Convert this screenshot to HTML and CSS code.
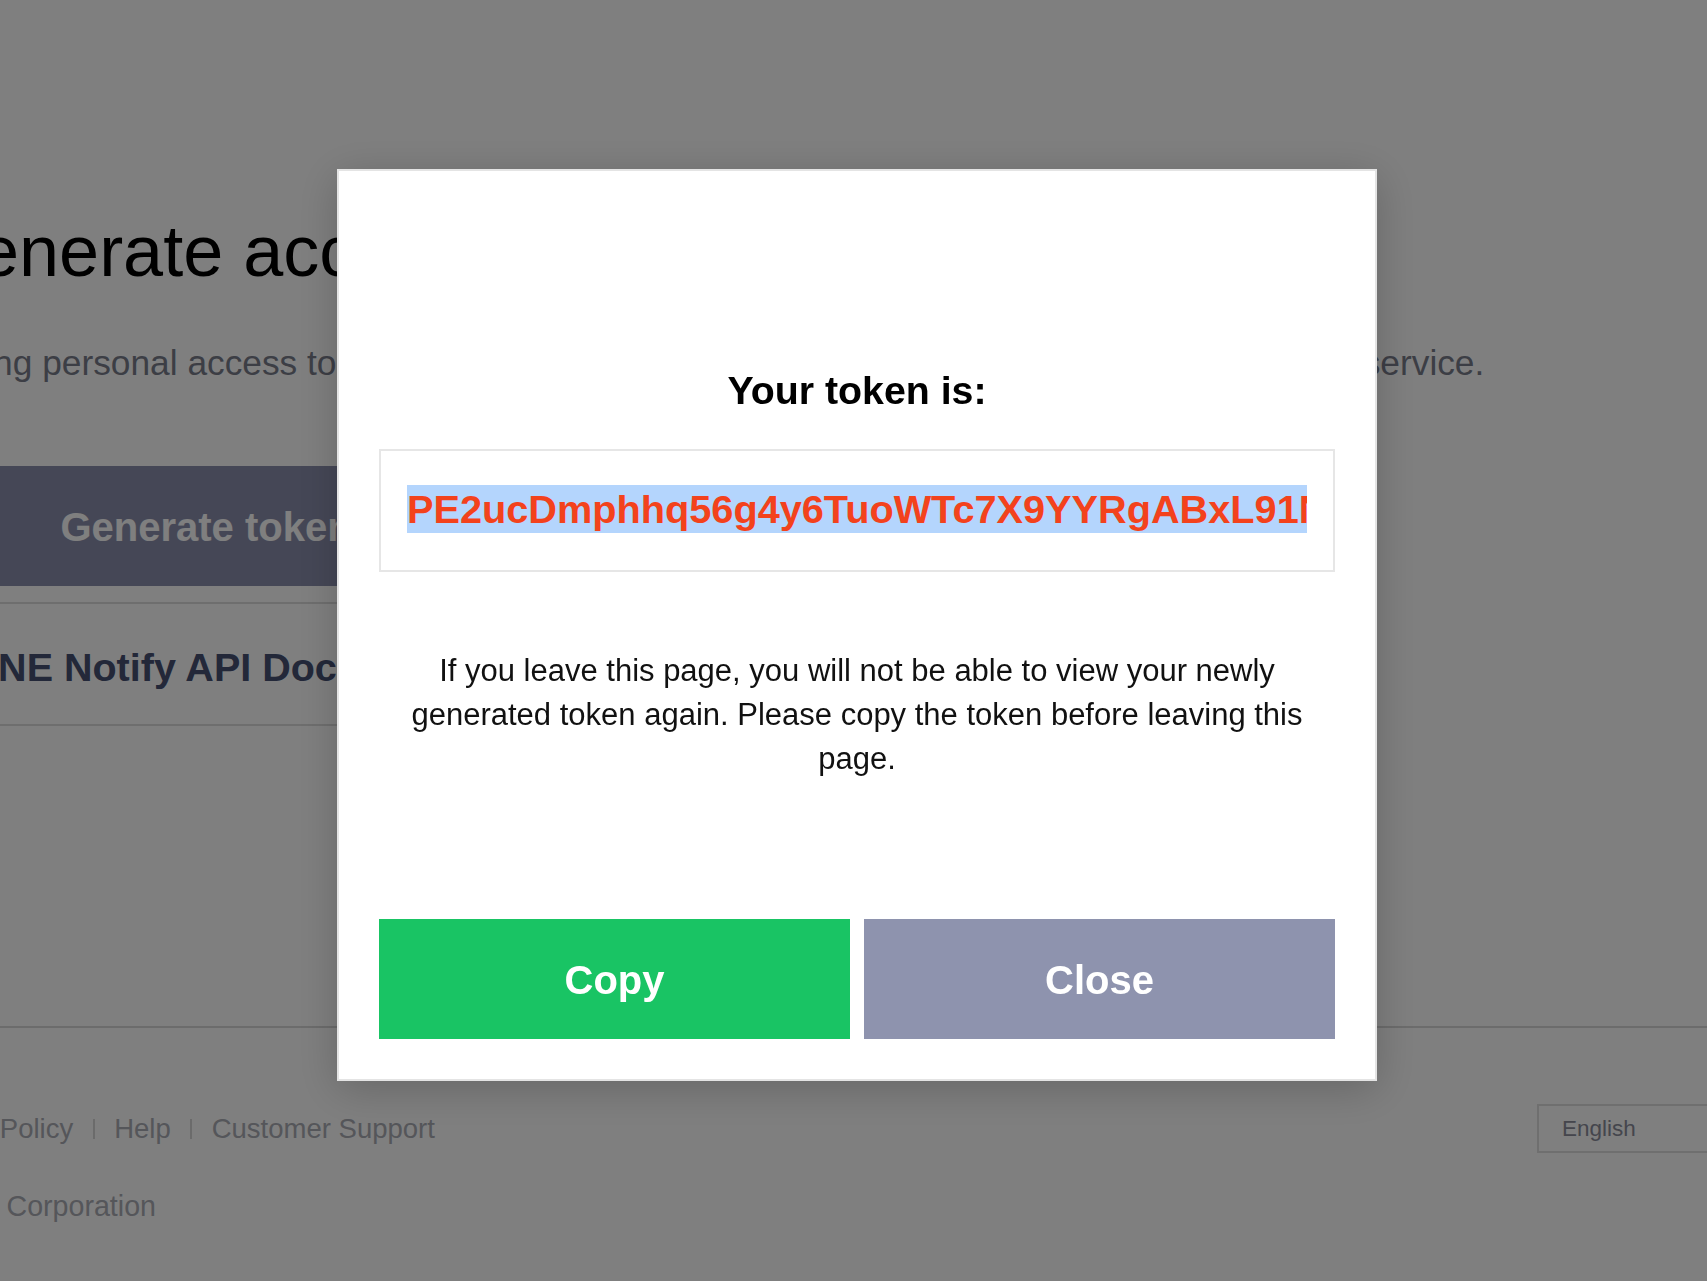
FILE: index.html
```html
<!DOCTYPE html>
<html>
<head>
    <meta charset="UTF-8">
    <title>LINE Notify - Generate access token</title>
    <link rel="stylesheet" href="styles.css">
</head>
<body>
    <!-- page behind the dialog -->
    <div class="page">
        <h1 class="page-title">Generate access token</h1>
        <p class="page-lead">By using personal access tokens, you can configure notifications without having to add a web service.</p>
        <button type="button" class="gen-btn">Generate token</button>
        <div class="doc-link">LINE Notify API Document</div>

        <div class="footer">
            <div class="footer-row">
                <ul class="footer-links">
                    <li>Privacy Policy</li>
                    <li class="sep"></li>
                    <li>Help</li>
                    <li class="sep"></li>
                    <li>Customer Support</li>
                </ul>
                <div class="lang-select">English</div>
            </div>
            <p class="copyright">&copy; LINE Corporation</p>
        </div>
    </div>

    <!-- token dialog -->
    <div class="overlay">
        <div class="modal">
            <h2 class="modal-title">Your token is:</h2>
            <div class="token-box">
                <div class="token-clip">
                    <span class="token-text">PE2ucDmphhq56g4y6TuoWTc7X9YYRgABxL91NkQe3vJ8sWm</span>
                </div>
            </div>
            <p class="modal-note">If you leave this page, you will not be able to view your newly generated token again. Please copy the token before leaving this page.</p>
            <div class="modal-actions">
                <button type="button" class="btn btn-copy">Copy</button>
                <button type="button" class="btn btn-close">Close</button>
            </div>
        </div>
    </div>
</body>
</html>
```

FILE: styles.css
```css
html, body {
    margin: 0;
    padding: 0;
    overflow: hidden;
}
body {
    background-color: #FFFFFF;
    font-family: "Liberation Sans", Arial, sans-serif;
    height: 1281px;
}

/* background page */
.page {
    margin-left: -94px;
    width: 1849px;
    padding-top: 206px;
}
.page-title {
    margin: 0;
    padding-left: 17px;
    font-size: 72px;
    font-weight: normal;
    line-height: 91px;
    color: #000000;
}
.page-lead {
    margin: 41px 0 0 -9px;
    font-size: 35.3px;
    line-height: 50px;
    color: #797C8B;
}
.gen-btn {
    display: block;
    margin-top: 78px;
    width: 600px;
    height: 120px;
    border: none;
    padding-top: 4px;
    background-color: #8B8FAD;
    color: #FFFFFF;
    font-family: "Liberation Sans", Arial, sans-serif;
    font-size: 40px;
    font-weight: bold;
}
.doc-link {
    margin-top: 16px;
    width: 1400px;
    padding: 40px 0 34px 57px;
    border-top: 2px solid #DDDDDD;
    border-bottom: 2px solid #DDDDDD;
    font-size: 39.5px;
    font-weight: bold;
    line-height: 46px;
    color: #465073;
}

.footer {
    margin-top: 300px;
    border-top: 2px solid #D8D8D8;
    padding-top: 76px;
}
.footer-row {
    display: flex;
    align-items: center;
    height: 49px;
}
.footer-links {
    display: flex;
    align-items: center;
    gap: 19.5px;
    margin: 0 0 0 -4px;
    padding: 0;
    list-style: none;
    font-size: 27.5px;
    color: #AAACB4;
}
.footer-links .sep {
    width: 2px;
    height: 20px;
    background-color: #D6D6D6;
}
.lang-select {
    margin-left: auto;
    margin-right: 1px;
    width: 190px;
    height: 45px;
    border: 2px solid #DEDEDE;
    padding-left: 23px;
    font-size: 22.5px;
    line-height: 45px;
    color: #8A8C9A;
}
.copyright {
    margin: 36px 0 0 0;
    font-size: 28.6px;
    line-height: 34px;
    color: #AAACB4;
}

/* dialog */
.overlay {
    position: fixed;
    top: 0;
    left: 0;
    right: 0;
    bottom: 0;
    background-color: rgba(0, 0, 0, 0.5);
    display: flex;
    align-items: flex-start;
    padding: 169px 0 0 337px;
}
.modal {
    box-sizing: border-box;
    width: 1040px;
    height: 912px;
    background-color: #FFFFFF;
    border: 2px solid #E4E4E4;
    padding: 196px 40px 40px 40px;
    box-shadow: 0 8px 40px rgba(0, 0, 0, 0.2);
    display: flex;
    flex-direction: column;
}
.modal-title {
    margin: 0;
    text-align: center;
    font-size: 39.3px;
    line-height: 46px;
    font-weight: bold;
    color: #000000;
}
.token-box {
    margin-top: 36px;
    height: 119px;
    box-sizing: content-box;
    border: 2px solid #E6E6E6;
    padding: 0 26px;
}
.token-clip {
    overflow: hidden;
    white-space: nowrap;
    padding-top: 34px;
}
.token-text {
    display: inline-block;
    background-color: #B4D5FD;
    color: #F3421C;
    font-size: 39.7px;
    font-weight: bold;
    line-height: 48px;
}
.modal-note {
    margin: 77px 0 0 0;
    text-align: center;
    font-size: 31px;
    line-height: 44px;
    color: #111111;
}
.modal-actions {
    margin-top: auto;
    display: flex;
    gap: 14px;
}
.btn {
    flex: 1;
    height: 120px;
    border: none;
    padding-top: 4px;
    color: #FFFFFF;
    font-family: "Liberation Sans", Arial, sans-serif;
    font-size: 40px;
    font-weight: bold;
}
.btn-copy {
    background-color: #19C464;
}
.btn-close {
    background-color: #8E93AE;
}
```
